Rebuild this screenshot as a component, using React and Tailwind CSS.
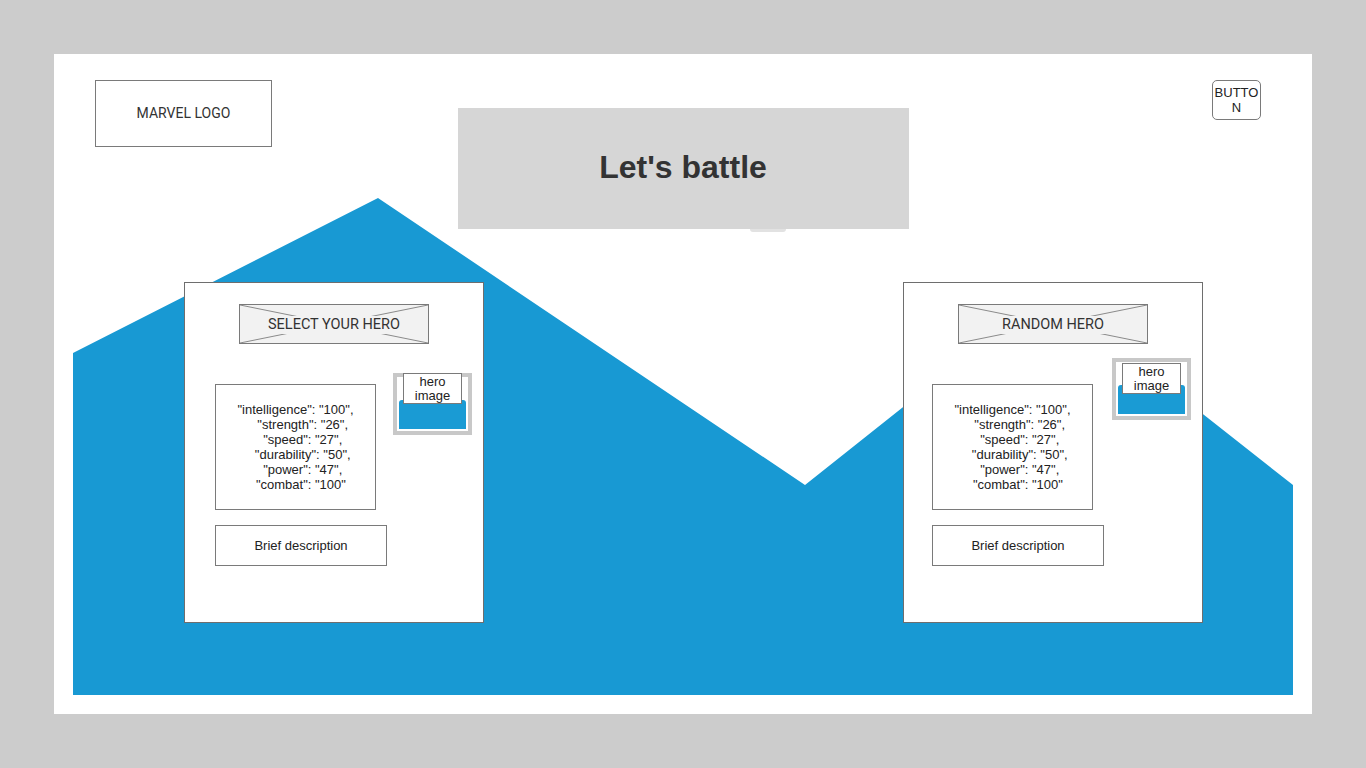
import React from "react";

// leading spaces mimic the pasted JSON indentation in the wireframe
const stats = [
  '"intelligence": "100",',
  '    "strength": "26",',
  '    "speed": "27",',
  '    "durability": "50",',
  '    "power": "47",',
  '   "combat": "100"',
];

// placeholder box with the crossed lines behind the label
const CrossBox = ({ label }) => (
  <div className="relative mx-auto flex h-[40px] w-[190px] items-center border border-[#7a7a7a] bg-[#f2f2f2]">
    <svg className="absolute inset-0 h-full w-full" viewBox="0 0 100 100" preserveAspectRatio="none">
      <line x1="0" y1="0" x2="100" y2="100" stroke="#8a8a8a" strokeWidth="1" vectorEffect="non-scaling-stroke" />
      <line x1="0" y1="100" x2="100" y2="0" stroke="#8a8a8a" strokeWidth="1" vectorEffect="non-scaling-stroke" />
    </svg>
    <div className="relative mt-[1px] h-[18px] w-full bg-[#f2f2f2] text-center font-['Roboto',sans-serif] text-[14.5px] leading-[18px] text-[#333]">
      {label}
    </div>
  </div>
);

const HeroImage = ({ top, left, labelTop }) => (
  <div className={`relative ${left} ${top}`}>
    <div className="flex h-[62px] w-[79px] flex-col justify-end border-4 border-[#c8c8c8] bg-white p-[2px]">
      <div className="h-[29px] rounded-t-[3px] bg-[#1a9bd4]" />
    </div>
    <div
      className={`absolute left-[10px] ${labelTop} flex h-[31px] w-[59px] items-center justify-center border border-[#7a7a7a] bg-white text-center text-[13px] leading-[14px] text-[#222]`}
    >
      hero image
    </div>
  </div>
);

const HeroCard = ({ title, imgTop, imgLeft, labelTop, statsLeft }) => (
  <div className="h-[341px] w-[300px] border border-[#6e6e6e] bg-white pt-[21px]">
    <CrossBox label={title} />
    <div className="flex items-start">
      <div
        className={`${statsLeft} mt-[40px] flex h-[126px] w-[161px] flex-col items-center justify-center border border-[#7a7a7a] text-[13px] leading-[15px] text-[#222]`}
      >
        {stats.map((s) => (
          <div key={s} className="whitespace-pre">
            {s}
          </div>
        ))}
      </div>
      <HeroImage top={imgTop} left={imgLeft} labelTop={labelTop} />
    </div>
    <div
      className={`${statsLeft} mt-[15px] flex h-[41px] w-[172px] items-center justify-center border border-[#7a7a7a] text-[13px] text-[#222]`}
    >
      Brief description
    </div>
  </div>
);

export default function App() {
  return (
    <div className="h-screen w-full bg-[#cccccc] p-[54px] font-['Liberation_Sans',Arial,sans-serif]">
      <div className="relative h-[660px] w-[1258px] bg-white">
        {/* blue mountains */}
        <svg className="absolute inset-0" width="1258" height="660" viewBox="0 0 1258 660">
          <polygon
            points="19,299 324,144 751,431 994,238 1239,431 1239,641 19,641"
            fill="#1899d3"
          />
        </svg>

        <div className="relative">
          {/* header */}
          <div className="grid grid-cols-[1fr_auto_1fr] items-start px-[41px] pt-[26px]">
            <div className="flex h-[67px] w-[177px] items-center justify-center border border-[#7a7a7a] font-['Roboto',sans-serif] text-[14px] text-[#333]">
              MARVEL LOGO
            </div>
            <div className="relative mt-[28px] flex h-[121px] w-[451px] items-center justify-center bg-[#d6d6d6] pb-[3px]">
              <div className="absolute left-[292px] top-full h-[3px] w-[36px] rounded-b-full bg-[#e2e2e2]" />
              <h1 className="text-[32px] font-bold text-[#333]">Let's battle</h1>
            </div>
            <div className="mr-[10px] flex h-[40px] w-[49px] items-center justify-center justify-self-end break-all rounded-[5px] border border-[#7a7a7a] px-[1px] text-center text-[13px] leading-[15px] text-[#222]">
              BUTTON
            </div>
          </div>

          {/* hero cards */}
          <div className="mt-[53px] flex justify-between pl-[130px] pr-[109px]">
            <HeroCard
              title="SELECT YOUR HERO"
              imgTop="mt-[29px]"
              imgLeft="ml-[17px]"
              labelTop="top-0"
              statsLeft="ml-[30px]"
            />
            <HeroCard
              title="RANDOM HERO"
              imgTop="mt-[14px]"
              imgLeft="ml-[19px]"
              labelTop="top-[5px]"
              statsLeft="ml-[28px]"
            />
          </div>
        </div>
      </div>
    </div>
  );
}
